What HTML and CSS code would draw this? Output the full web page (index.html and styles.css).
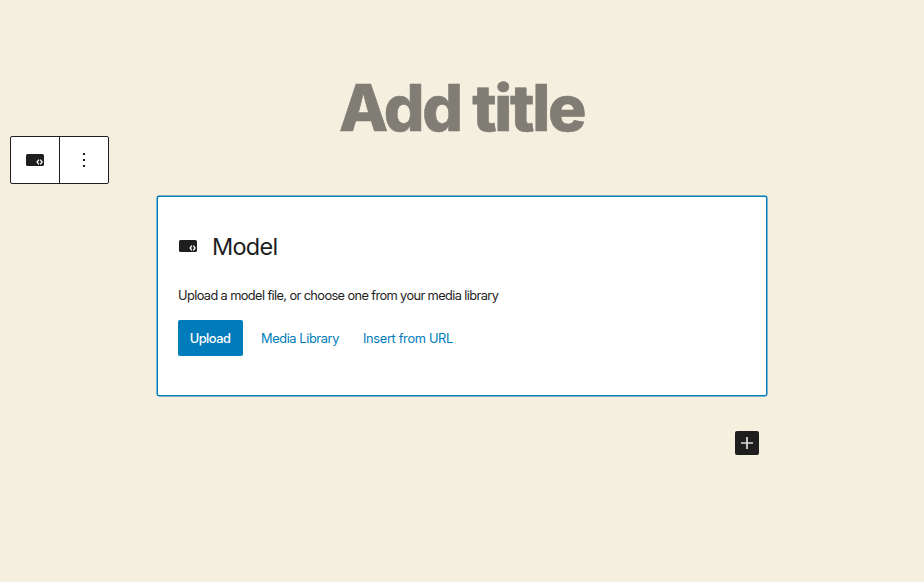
FILE: index.html
```html
<!DOCTYPE html>
<html lang="en">
<head>
<meta charset="utf-8">
<title>Edit post</title>
<link rel="stylesheet" href="styles.css">
</head>
<body>
<svg class="defs" aria-hidden="true">
  <symbol id="model" viewBox="0 0 18 12">
    <rect width="18" height="12" rx="1.6" fill="#1e1e1e"/>
    <path d="M12.9 5.7 11.1 8l1.8 2.3M14.3 5.7 16.1 8l-1.8 2.3" fill="none" stroke="#fff" stroke-width="1.3"/>
  </symbol>
</svg>
<main class="editor">
  <h1 class="title"><span class="title-text">Add title</span></h1>
  <div class="toolbar">
    <button class="tool" aria-label="Model"><svg class="model-icon"><use href="#model"/></svg></button>
    <button class="tool" aria-label="Options"><svg width="2" height="14" fill="#1e1e1e"><path d="M0 0h2v2H0zM0 6h2v2H0zM0 12h2v2H0z"/></svg></button>
  </div>
  <section class="placeholder">
    <h2 class="label"><svg class="model-icon"><use href="#model"/></svg><span class="label-text">Model</span></h2>
    <p class="instructions"><span class="instructions-text">Upload a model file, or choose one from your media library</span></p>
    <div class="actions">
      <button class="upload">Upload</button>
      <button class="link library">Media Library</button>
      <button class="link url">Insert from URL</button>
    </div>
  </section>
  <div class="appender">
    <button class="add" aria-label="Add block"><svg width="12" height="12"><path d="M6 0v12M0 6h12" stroke="#ddd" stroke-width="1.7"/></svg></button>
  </div>
</main>
</body>
</html>
```
FILE: styles.css
```css
* { box-sizing: border-box; }
body { margin: 0; background: #f5efe0; color: #1e1e1e; font-family: Inter, sans-serif; }
button { font: inherit; letter-spacing: inherit; padding: 0; border: 0; background: none; }
svg { display: block; }
.defs { position: absolute; width: 0; height: 0; }
.editor { display: flex; flex-direction: column; height: 582px; overflow: hidden; }
.title { margin: 68px 0 0; height: 68px; padding-right: 1px; line-height: 80px; text-align: center; font-size: 64px; font-weight: 800; letter-spacing: -2.4px; color: #807d75; -webkit-text-stroke: .6px #807d75; }
.toolbar { display: flex; width: 99px; height: 48px; margin-left: 10px; border: 1px solid #1e1e1e; border-radius: 2px; background: #fff; }
.tool { flex: 1; display: flex; align-items: center; justify-content: center; }
.tool + .tool { border-left: 1px solid #1e1e1e; }
.model-icon { width: 18px; height: 12px; flex: none; }
.placeholder { width: 608px; height: 198px; margin: 13px auto 0; padding: 33px 20px 0; border-radius: 1px; background: #fff; box-shadow: 0 0 0 1.5px #007cba; }
.label { display: flex; align-items: center; gap: 15px; height: 32px; margin: 0 0 24px; padding-left: 1px; font-size: 23.5px; font-weight: 400; letter-spacing: -.75px; }
.label-text { line-height: 32px; padding-top: 2px; }
.instructions { margin: 0 0 14px; height: 20px; line-height: 20px; font-size: 12.8px; letter-spacing: -.61px; white-space: nowrap; }
.actions { display: flex; height: 36px; font-size: 12.8px; letter-spacing: -.33px; white-space: nowrap; }
.upload { width: 65px; padding-right: 1px; border-radius: 2px; background: #007cba; color: #fff; font-weight: 500; letter-spacing: -.5px; }
.link { color: #007cba; text-align: left; }
.library { width: 102px; margin-left: 18px; letter-spacing: -.4px; }
.appender { display: flex; justify-content: flex-end; margin: 36px 165px 0 0; }
.add { display: flex; align-items: center; justify-content: center; width: 24px; height: 24px; border-radius: 2px; background: #1e1e1e; }
```
